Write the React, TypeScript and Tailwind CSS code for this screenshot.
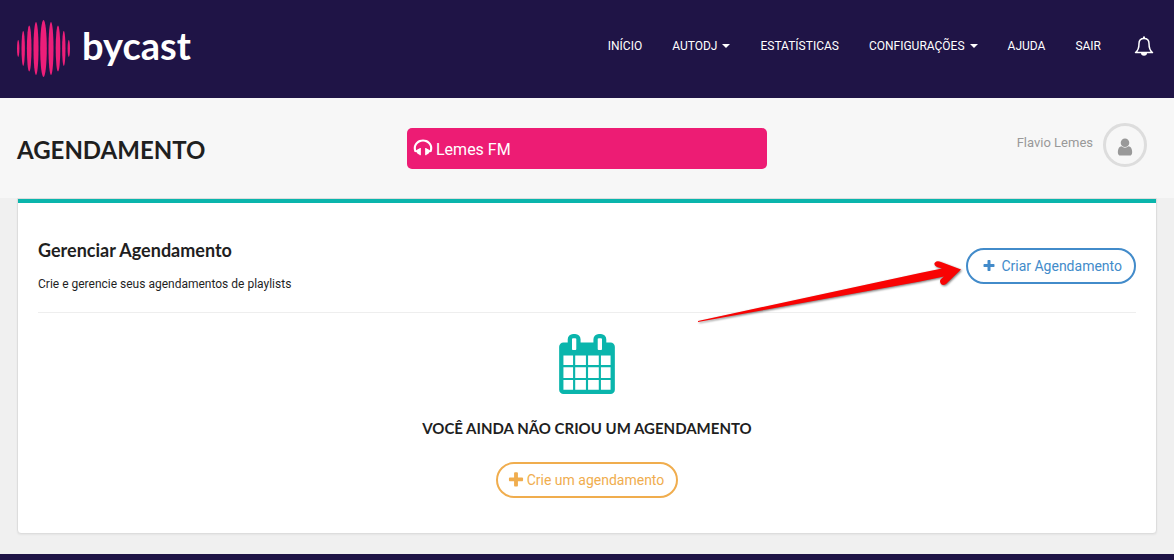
import type {ReactNode} from "react"

const ICONS = {
    plus: "M1600 736v192q0 40-28 68t-68 28h-416v416q0 40-28 68t-68 28h-192q-40 0-68-28t-28-68v-416h-416q-40 0-68-28t-28-68v-192q0-40 28-68t68-28h416v-416q0-40 28-68t68-28h192q40 0 68 28t28 68v416h416q40 0 68 28t28 68z",
    user: "M1536 1399q0 109-62.5 187t-150.5 78h-854q-88 0-150.5-78t-62.5-187q0-85 8.5-160.5t31.5-152 58.5-131 94-89 134.5-34.5q131 128 313 128t313-128q76 0 134.5 34.5t94 89 58.5 131 31.5 152 8.5 160.5zm-256-887q0 159-112.5 271.5t-271.5 112.5-271.5-112.5-112.5-271.5 112.5-271.5 271.5-112.5 271.5 112.5 112.5 271.5z",
    headphones: "M1728 886q0 166-60 314l-20 49-185 33q-22 83-90.5 136.5t-156.5 53.5v32q0 14-9 23t-23 9h-64q-14 0-23-9t-9-23v-576q0-14 9-23t23-9h64q14 0 23 9t9 23v32q71 0 130 35.5t93 95.5l68-12q29-95 29-193 0-148-88-279t-236.5-209-315.5-78-315.5 78-236.5 209-88 279q0 98 29 193l68 12q34-60 93-95.5t130-35.5v-32q0-14 9-23t23-9h64q14 0 23 9t9 23v576q0 14-9 23t-23 9h-64q-14 0-23-9t-9-23v-32q-88 0-156.5-53.5t-90.5-136.5l-185-33-20-49q-60-148-60-314 0-151 67-291t179-242.5 266-163.5 320-61 320 61 266 163.5 179 242.5 67 291z",
    calendar: "M192 1664h288v-288h-288v288zm352 0h320v-288h-320v288zm-352-352h288v-320h-288v320zm352 0h320v-320h-320v320zm-352-384h288v-288h-288v288zm736 736h320v-288h-320v288zm-384-736h320v-288h-320v288zm768 736h288v-288h-288v288zm-384-352h320v-320h-320v320zm-352-864v-288q0-13-9.5-22.5t-22.5-9.5h-64q-13 0-22.5 9.5t-9.5 22.5v288q0 13 9.5 22.5t22.5 9.5h64q13 0 22.5-9.5t9.5-22.5zm736 864h288v-320h-288v320zm-384-384h320v-288h-320v288zm384 0h288v-288h-288v288zm32-480v-288q0-13-9.5-22.5t-22.5-9.5h-64q-13 0-22.5 9.5t-9.5 22.5v288q0 13 9.5 22.5t22.5 9.5h64q13 0 22.5-9.5t9.5-22.5zm384-64v1280q0 52-38 90t-90 38h-1408q-52 0-90-38t-38-90v-1280q0-52 38-90t90-38h128v-96q0-66 47-113t113-47h64q66 0 113 47t47 113v96h384v-96q0-66 47-113t113-47h64q66 0 113 47t47 113v96h128q52 0 90 38t38 90z",
}

const NAV = [
    { label: "INÍCIO" },
    { label: "AUTODJ", menu: true },
    { label: "ESTATÍSTICAS" },
    { label: "CONFIGURAÇÕES", menu: true },
    { label: "AJUDA" },
    { label: "SAIR" },
]

// x centre, half height and half width of each bar in the logo
const BARS = [
    [1.2, 8.5, 1.2],
    [6.2, 17.5, 1.7],
    [12.2, 23, 2.3],
    [19, 26.5, 2.5],
    [26.5, 28.5, 3.3],
    [34, 26.5, 2.5],
    [41, 23, 2.3],
    [46.8, 17.5, 1.7],
    [51.8, 8.5, 1.2],
]

function Icon({ name, className }: { name: keyof typeof ICONS; className: string }) {
    return (
        <svg viewBox="0 0 1792 1792" fill="currentColor" className={className} aria-hidden="true">
            <path d={ICONS[name]} />
        </svg>
    )
}

function Logo() {
    return (
        <a href="#" className="flex items-center gap-3 text-white">
            <svg viewBox="0 0 53 58" className="w-[53px] h-[58px] fill-[#ed1e79]" aria-hidden="true">
                {BARS.map(([x, ry, rx]) => (
                    <ellipse key={x} cx={x} cy="28.5" rx={rx} ry={ry} />
                ))}
            </svg>
            <span className="pb-2 font-[Lato] text-[38px] font-bold">bycast</span>
        </a>
    )
}

function PillButton({ className, children }: { className: string; children: ReactNode }) {
    return (
        <button type="button" className={`flex h-9 items-center rounded-full border-2 pr-3 text-sm ${className}`}>
            {children}
        </button>
    )
}

export default function App() {
    return (
        <div className="min-h-screen flex flex-col bg-[#f0f0f0] font-[Roboto,sans-serif] text-[#1f1f1f]">
            <header className="flex h-[98px] justify-between bg-[#1f1446] pl-[17px] pr-5">
                <Logo />
                <nav className="flex h-[92px] items-center gap-[30px] text-xs text-white">
                    {NAV.map(item => (
                        <a key={item.label} href="#" className="flex items-center gap-[5px]">
                            {item.label}
                            {item.menu && (
                                <svg viewBox="0 0 8 4" className="w-2 h-1 fill-white" aria-hidden="true">
                                    <path d="M0 0h8L4 4z" />
                                </svg>
                            )}
                        </a>
                    ))}
                    <button type="button" aria-label="Notificações" className="pl-[3px]">
                        <svg viewBox="0 0 20 20" className="size-5" aria-hidden="true">
                            <path
                                d="M1.500 16.500c3-2 3.500-5 3.500-9 0-3 2-5 5-5s5 2 5 5c0 4 .5 7 3.500 9z"
                                fill="none"
                                stroke="#fff"
                                strokeWidth="1.500"
                                strokeLinejoin="round"
                            />
                            <path d="M9 .5h2v2H9zM7 17h6a3 2.700 0 0 1-6 0z" fill="#fff" />
                        </svg>
                    </button>
                </nav>
            </header>

            <div className="grid h-[100px] grid-cols-3 items-center bg-[#f7f7f7] px-[17px]">
                <h1 className="pt-1 font-[Lato] text-2xl font-bold">AGENDAMENTO</h1>
                <div className="flex h-[41px] w-[360px] items-center gap-[3px] justify-self-center rounded-[5px] bg-[#ed1c74] px-[6px] text-base text-white">
                    <Icon name="headphones" className="size-5" />
                    <span className="pt-1">Lemes FM</span>
                </div>
                <div className="flex items-center gap-[10px] justify-self-end pr-[10px] pb-[6px] text-[13px] text-[#999]">
                    <span className="pb-1">Flavio Lemes</span>
                    <span className="flex size-11 items-center justify-center rounded-full border-3 border-[#ddd] pt-1">
                        <Icon name="user" className="size-5" />
                    </span>
                </div>
            </div>

            <main className="relative mx-[17px] mb-5 rounded-b border border-[#ddd] bg-white shadow-xs">
                <div className="border-t-4 border-[#0ab5ac] px-5 pb-[35px]">
                    <div className="flex h-[110px] items-center justify-between border-b border-[#eee] pt-4">
                        <div className="flex flex-col gap-3 pb-1">
                            <h2 className="font-[Lato] text-lg font-bold">Gerenciar Agendamento</h2>
                            <p className="text-xs">Crie e gerencie seus agendamentos de playlists</p>
                        </div>
                        <PillButton className="gap-[5px] border-[#428bca] pl-[14px] text-[#428bca]">
                            <Icon name="plus" className="size-[14px]" />
                            Criar Agendamento
                        </PillButton>
                    </div>
                    <div className="flex flex-col items-center pt-[21px]">
                        <Icon name="calendar" className="size-[60px] text-[#0ab5ac]" />
                        <p className="mt-6 mb-6 font-[Lato] text-[15px] leading-5 font-bold">VOCÊ AINDA NÃO CRIOU UM AGENDAMENTO</p>
                        <PillButton className="gap-[2px] border-[#f0ad4e] pl-[9px] text-[#f0ad4e]">
                            <Icon name="plus" className="size-[18px]" />
                            Crie um agendamento
                        </PillButton>
                    </div>
                </div>
                {/* pointer to the create button */}
                <svg
                    viewBox="0 0 266 68"
                    className="pointer-events-none absolute top-[60px] right-[193px] h-[68px] w-[266px] drop-shadow-[1px_1px_1px_#0008]"
                    aria-hidden="true"
                >
                    <path
                        d="M1 62L223 14 245 9.500 240 8Q236 6 238 3.500 240 1.500 244 3L264 10.500 249 25Q246 27 244 25 242 22 244 20L247 17.500 223 22.500 1 63z"
                        fill="#f80303"
                    />
                </svg>
            </main>
            <footer className="grow bg-[#1f1446]" />
        </div>
    )
}
